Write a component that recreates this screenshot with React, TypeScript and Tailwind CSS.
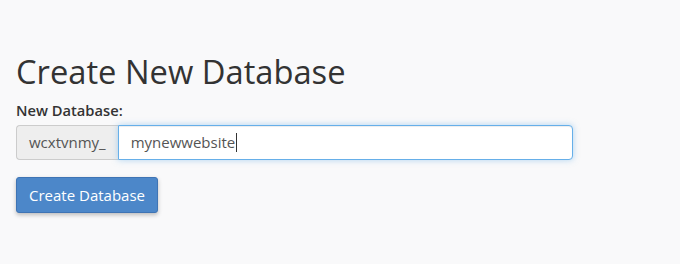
import React from "react";

export default function App() {
  return (
    <div
      className="h-[264px] w-[680px] bg-[#f9f9fa] px-4 pt-[48px] text-[#333]"
      style={{ fontFamily: '"Open Sans", "Noto Sans", sans-serif' }}
    >
      <h1 className="text-[32.7px] leading-[48px] font-normal text-[#333]">Create New Database</h1>
      <label className="mt-[4px] block text-[14.7px] leading-[20px] font-semibold text-[#333]">
        New Database:
      </label>
      <div className="mt-[5px] flex h-[35px] w-[557px]">
        <span className="flex items-center rounded-l-[4px] border border-r-0 border-[#ccc] bg-[#eee] px-[12px] text-[15px] text-[#555]">
          wcxtvnmy_
        </span>
        <div className="flex flex-1 items-center rounded-r-[4px] border border-[#66afe9] bg-white px-[12px] text-[15px] text-[#555] shadow-[inset_0_1px_1px_rgba(0,0,0,0.075),0_0_6px_rgba(102,175,233,0.5)]">
          mynewwebsite
          <span className="ml-px inline-block h-[19px] w-px bg-[#333]" />
        </div>
      </div>
      <button
        type="button"
        className="mt-[17px] h-[36px] rounded-[3px] border border-[#3f74b4] bg-[#4c87c9] px-[12px] text-[15px] text-white shadow-[0_2px_4px_rgba(0,0,0,0.25)]"
      >
        Create Database
      </button>
    </div>
  );
}
